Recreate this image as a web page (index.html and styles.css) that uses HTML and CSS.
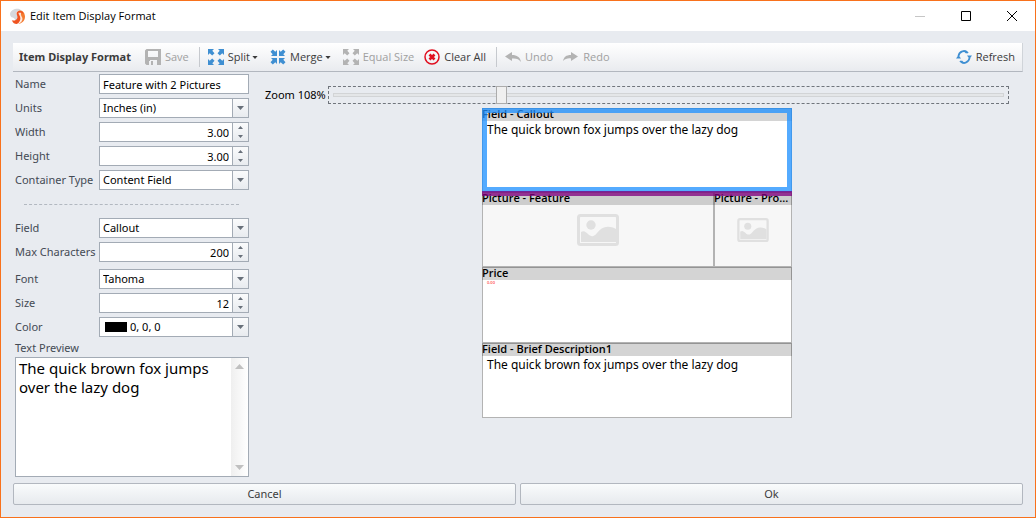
FILE: index.html
```
<!DOCTYPE html>
<html lang="en">
<head>
<meta charset="utf-8">
<title>Edit Item Display Format</title>
<link rel="stylesheet" href="styles.css">
</head>
<body>
<svg class="defs" aria-hidden="true">
  <symbol id="down" viewBox="0 0 7 4"><path d="M0 0h7L3.500 4z" fill="currentColor"/></symbol>
  <symbol id="spin" viewBox="0 0 5 12"><path d="M0 3h5L2.500 0zM0 9h5L2.500 12z" fill="currentColor"/></symbol>
  <symbol id="picture" viewBox="0 0 42 32">
    <rect x="1.500" y="1.500" width="39" height="29" rx="2" fill="#f7f7f7" stroke="#e0e0e0" stroke-width="3"/>
    <circle cx="14" cy="11" r="4.700" fill="#e0e0e0"/>
    <path d="M4 18c3-2 5 0 7 2 3 3 6 3 9-1 4-5 8-7 13-6 3 0 4 1 6 2v13H4z" fill="#e0e0e0"/>
  </symbol>
  <symbol id="expand" viewBox="0 0 16 16"><path d="M0 0h6L4.300 1.700 6.500 4.200 4.200 6.500 1.700 4.300 0 6zM16 0h-6l1.700 1.700L9.500 4.200 11.800 6.500l2.500-2.200L16 6zM0 16h6l-1.700-1.700L6.500 11.800 4.200 9.500l-2.500 2.200L0 10zM16 16h-6l1.700-1.700L9.500 11.800 11.800 9.500l2.500 2.200L16 10z" fill="currentColor"/></symbol>
  <symbol id="collapse" viewBox="0 0 16 16"><path d="M7 7H1l1.700-1.700L.5 2.800 2.800.5l2.500 2.200L7 1zM9 7h6l-1.700-1.700 2.200-2.500L13.200.5l-2.500 2.200L9 1zM7 9H1l1.700 1.700L.5 13.200l2.300 2.300 2.500-2.200L7 15zM9 9h6l-1.700 1.700 2.200 2.500-2.300 2.300-2.500-2.200L9 15z" fill="currentColor"/></symbol>
</svg>
<div class="window">
  <header class="titlebar">
    <svg class="logo" viewBox="0 0 16 18" aria-hidden="true">
      <path d="M0 6C1 2 6 0 10 1l4 3-4-1C6 3 6 6 8 8c2 3 1 5-2 7 0-3-1-4-3-5-2 0-3-2-3-4z" fill="#d6d8dc"/>
      <path d="M9 3c4-2 7 2 7 6 0 5-4 8-8 8 4-2 5-5 3-8-2-2-4-4-2-6z" fill="#f47b30"/>
      <path d="M2 13c3 1 5 0 6-3 0-2-1-3-1-4 0-2 1-3 3-3 3 0 5 2 4 3-3-1-4 0-3 2 2 4 0 8-4 9-2 0-4-1-5-4z" fill="#ef5320"/>
      <path d="M9 5c0 2 2 3 2 6 0 2-1 4-3 6 4-1 6-4 5-7-1-2-2-3-1-5z" fill="#fff" opacity=".8"/>
    </svg>
    <h1 class="title">Edit Item Display Format</h1>
    <div class="caption">
      <button class="caption-btn" aria-label="Minimize" disabled><svg width="10" height="10"><path d="M0 5.500h10" stroke="#c6c6c6"/></svg></button>
      <button class="caption-btn" aria-label="Maximize"><svg width="10" height="10"><path d="M.5.5h9v9h-9z" fill="none" stroke="#000"/></svg></button>
      <button class="caption-btn" aria-label="Close"><svg width="10" height="10"><path d="M0 0l10 10M10 0L0 10" stroke="#000"/></svg></button>
    </div>
  </header>
  <main class="content">
    <div class="toolbar" role="toolbar" aria-label="Item Display Format">
      <h2 class="toolbar-title">Item Display Format</h2>
      <button class="tool" disabled><svg class="icon" viewBox="0 0 16 16"><path fill="#b3b3b3" fill-rule="evenodd" d="M0 1.500L1.500 0H16v16H5v-4H4v4H1.500L0 14.500zM3 2v6h10V2zM5 11v5h7v-5z"/><path fill="#b3b3b3" d="M6 12h2v4H6z"/></svg>Save</button>
      <span class="separator"></span>
      <button class="tool blue"><svg class="icon"><use href="#expand"/></svg>Split<svg class="caret"><use href="#down"/></svg></button>
      <button class="tool blue"><svg class="icon"><use href="#collapse"/></svg>Merge<svg class="caret"><use href="#down"/></svg></button>
      <button class="tool" disabled><svg class="icon"><use href="#expand"/></svg>Equal Size</button>
      <button class="tool"><svg class="icon" viewBox="0 0 16 16" fill="none" stroke="#e01020"><circle cx="8" cy="8" r="7" stroke-width="1.500"/><path d="M5.500 5.500l5 5M10.500 5.500l-5 5" stroke-width="2.600"/></svg>Clear All</button>
      <span class="separator"></span>
      <button class="tool" disabled><svg class="icon" viewBox="0 0 16 16"><path fill="#b3b3b3" d="M0 7.500L7 3v3c5 0 8 2 9 7-2-3-5-4-9-3.500V12z"/></svg>Undo</button>
      <button class="tool" disabled><svg class="icon" viewBox="0 0 16 16"><path fill="#b3b3b3" d="M15 7.500L8 3v3c-5 0-7 2-8 6 2-2 5-3 8-2.500V12z"/></svg>Redo</button>
      <button class="tool refresh"><svg class="icon" viewBox="0 0 16 16"><path d="M2.500 7A5.500 5.500 0 0 1 12 4M13.500 9A5.500 5.500 0 0 1 4 12" fill="none" stroke="#3f8fd2" stroke-width="1.800"/><path d="M11 6.500h5L13.500 10zM0 9.500h5L2.500 6zM7 1.200l3 .3 2 2-2 1zM9 14.800l-3-.3-2-2 2-1z" fill="#3f8fd2"/></svg>Refresh</button>
    </div>
    <div class="body">
      <form class="panel">
        <div class="group">
          <div class="row"><label for="name">Name</label><div class="box"><input id="name" type="text" value="Feature with 2 Pictures"></div></div>
          <div class="row"><label for="units">Units</label><div class="box"><select id="units"><option>Inches (in)</option></select><span class="drop"><svg class="arrow"><use href="#down"/></svg></span></div></div>
          <div class="row"><label for="width">Width</label><div class="box"><input id="width" class="num" type="text" inputmode="decimal" value="3.00"><span class="drop"><svg class="spin"><use href="#spin"/></svg></span></div></div>
          <div class="row"><label for="height">Height</label><div class="box"><input id="height" class="num" type="text" inputmode="decimal" value="3.00"><span class="drop"><svg class="spin"><use href="#spin"/></svg></span></div></div>
          <div class="row"><label for="type">Container Type</label><div class="box"><select id="type"><option>Content Field</option></select><span class="drop"><svg class="arrow"><use href="#down"/></svg></span></div></div>
        </div>
        <hr class="divider">
        <div class="group">
          <div class="row"><label for="field">Field</label><div class="box"><select id="field"><option>Callout</option></select><span class="drop"><svg class="arrow"><use href="#down"/></svg></span></div></div>
          <div class="row"><label for="max">Max Characters</label><div class="box"><input id="max" class="num" type="text" inputmode="numeric" value="200"><span class="drop"><svg class="spin"><use href="#spin"/></svg></span></div></div>
        </div>
        <div class="group font-group">
          <div class="row"><label for="font">Font</label><div class="box"><select id="font"><option>Tahoma</option></select><span class="drop"><svg class="arrow"><use href="#down"/></svg></span></div></div>
          <div class="row"><label for="size">Size</label><div class="box"><input id="size" class="num" type="text" inputmode="numeric" value="12"><span class="drop"><svg class="spin"><use href="#spin"/></svg></span></div></div>
          <div class="row"><label for="color">Color</label><div class="box"><span class="swatch"></span><select id="color"><option>0, 0, 0</option></select><span class="drop"><svg class="arrow"><use href="#down"/></svg></span></div></div>
        </div>
        <label class="preview-label" for="preview">Text Preview</label>
        <div class="preview">
          <textarea id="preview">The quick brown fox jumps over the lazy dog</textarea>
          <div class="scrollbar"><svg width="9" height="5"><path d="M0 5h9L4.500 0z" fill="#c0c0c0"/></svg><svg width="9" height="5"><path d="M0 0h9L4.500 5z" fill="#c0c0c0"/></svg></div>
        </div>
      </form>
      <section class="stage">
        <div class="zoom"><label for="zoom">Zoom 108%</label><div class="slider"><input id="zoom" type="range" min="0" max="438" value="108"></div></div>
        <div class="canvas">
          <article class="cell selected"><h3>Field - Callout</h3><p>The quick brown fox jumps over the lazy dog</p></article>
          <div class="pictures">
            <article class="cell picture"><h3>Picture - Feature</h3><div class="art"><svg class="large"><use href="#picture"/></svg></div></article>
            <article class="cell picture"><h3>Picture - Pro...</h3><div class="art"><svg class="small"><use href="#picture"/></svg></div></article>
            <span class="drop-line"></span>
          </div>
          <article class="cell"><h3>Price</h3><p class="price">0.00</p></article>
          <article class="cell"><h3>Field - Brief Description1</h3><p>The quick brown fox jumps over the lazy dog</p></article>
        </div>
      </section>
    </div>
    <footer class="actions"><button class="action">Cancel</button><button class="action">Ok</button></footer>
  </main>
</div>
</body>
</html>
```
FILE: styles.css
```
* { box-sizing: border-box; }
body { margin: 0; font: 11px/16px "Noto Sans", sans-serif; color: #000; }
h1, h2, h3, p { margin: 0; font-size: inherit; }
button, input, select, textarea { font: inherit; color: inherit; margin: 0; padding: 0; border: 0; background: none; border-radius: 0; outline: 0; }
svg { display: block; flex: none; }
.defs { position: absolute; width: 0; height: 0; }
.window { display: flex; flex-direction: column; min-height: 100vh; border: 1px solid #f8711c; background: #e8ebf0; }
.titlebar { display: flex; align-items: center; height: 30px; padding-left: 9px; background: #fff; }
.logo { width: 15px; height: 17px; }
.title { margin-left: 5px; font: 400 11px/16px "Open Sans", sans-serif; }
.caption { display: flex; margin-left: auto; }
.caption-btn { display: grid; place-items: center; width: 46px; height: 30px; }
.content { display: flex; flex: 1; flex-direction: column; padding: 12px; }
.toolbar { display: flex; align-items: center; height: 29px; padding: 0 7px 0 6px; color: #3b3b3b; background: linear-gradient(#fff, #e9ebef); border-bottom: 1px solid #b2b7bf; border-right: 1px solid #d0d4d9; font-family: "Open Sans", sans-serif; }
.toolbar-title { margin-right: 14px; font: 700 11px/16px "Noto Sans", sans-serif; }
.tool { display: flex; align-items: center; gap: 4px; margin-right: 10px; font-size: 11px; white-space: nowrap; }
.tool:disabled { color: #a0a0a0; }
.icon { width: 16px; height: 16px; color: #b3b3b3; }
.blue { margin-right: 12px; }
.blue .icon { color: #3f8fd2; }
.caret { width: 6px; height: 3px; margin-left: -2px; }
.separator { width: 1px; height: 20px; margin-right: 8px; background: #c6c9ce; }
.refresh { margin: 0 0 0 auto; }
.body { display: grid; grid-template-columns: 236px minmax(0, 1fr); flex: 1; padding-top: 2px; }
.panel { display: flex; flex-direction: column; padding-left: 2px; color: #444a54; }
.group { display: grid; grid-template-columns: minmax(0, 1fr); gap: 4px; }
.font-group { margin-top: 7px; }
.row { display: grid; grid-template-columns: 84px minmax(0, 1fr); align-items: center; white-space: nowrap; }
.box { display: flex; align-items: center; height: 20px; border: 1px solid #a3abb5; background: #fff; color: #000; }
.box input, .box select { flex: 1; min-width: 0; height: 18px; padding: 0 3px; appearance: none; }
.box .num { text-align: right; }
.drop { display: grid; place-items: center; flex: none; width: 16px; height: 18px; border-left: 1px solid #a3abb5; background: linear-gradient(#fafbfc, #e8ebef); color: #68707a; pointer-events: none; }
.arrow { width: 7px; height: 4px; }
.spin { width: 5px; height: 12px; }
.swatch { flex: none; width: 22px; height: 10px; margin-left: 5px; background: #000; }
.divider { width: 215px; margin: 14px 0 13px 9px; border: 0; border-top: 1px dashed #b2b8c0; }
.preview-label { margin: 3px 0 1px; }
.preview { display: flex; flex: 1; border: 1px solid #a3abb5; background: #fff; color: #000; }
.preview textarea { flex: 1; min-width: 0; padding: 1px 3px; resize: none; overflow: hidden; font-size: 15px; line-height: 19px; }
.scrollbar { display: flex; flex-direction: column; justify-content: space-between; align-items: center; width: 17px; padding: 6px 0; background: linear-gradient(90deg, #efefef, #fff); }
.stage { display: flex; flex-direction: column; padding: 12px 14px 0 16px; }
.zoom { display: flex; align-items: center; gap: 2px; white-space: nowrap; }
.slider { display: flex; flex: 1; height: 18px; padding: 0 4px; border: 1px dashed #70757c; align-items: center; }
.slider input { flex: 1; appearance: none; height: 18px; }
.slider input::-webkit-slider-runnable-track { height: 4px; border: 1px solid #d2d4d6; background: #e4e6e8; }
.slider input::-webkit-slider-thumb { appearance: none; width: 11px; height: 18px; margin-top: -8px; border: 1px solid #acacac; background: #f0f0f0; }
.canvas { display: grid; grid-template-rows: 84px 75px 76px 75px; width: 310px; margin: 4px auto 0; background: #c6c6c6; }
.cell { display: flex; flex-direction: column; min-width: 0; background: #fff; box-shadow: inset 0 0 0 1px #b3b3b3; }
.cell h3 { flex: none; height: 13px; background: rgba(0, 0, 0, .17); font: 600 11px/12px "Open Sans", sans-serif; white-space: nowrap; }
.cell p { padding: 1px 5px; font-size: 12px; white-space: nowrap; }
.cell .price { font-size: 4px; line-height: 4px; color: #f00; }
.selected { position: relative; }
.selected::after { content: ""; position: absolute; inset: 0; border: 5px solid rgba(30, 144, 255, .76); }
.pictures { position: relative; display: grid; grid-template-columns: 232px minmax(0, 1fr); }
.picture { background: #f7f7f7; }
.art { display: grid; flex: 1; place-items: center; padding-bottom: 12px; }
.large { width: 42px; height: 32px; }
.small { width: 32px; height: 24px; }
.drop-line { position: absolute; inset: -1px 0 auto; height: 5px; background: rgba(128, 0, 128, .76); }
.actions { display: grid; grid-template-columns: 1fr 1fr; gap: 4px; padding-top: 6px; }
.action { height: 22px; border: 1px solid #b2b7bf; border-radius: 2px; background: linear-gradient(#f9fbfc, #e7eaee); color: #3b3b3b; }
```
